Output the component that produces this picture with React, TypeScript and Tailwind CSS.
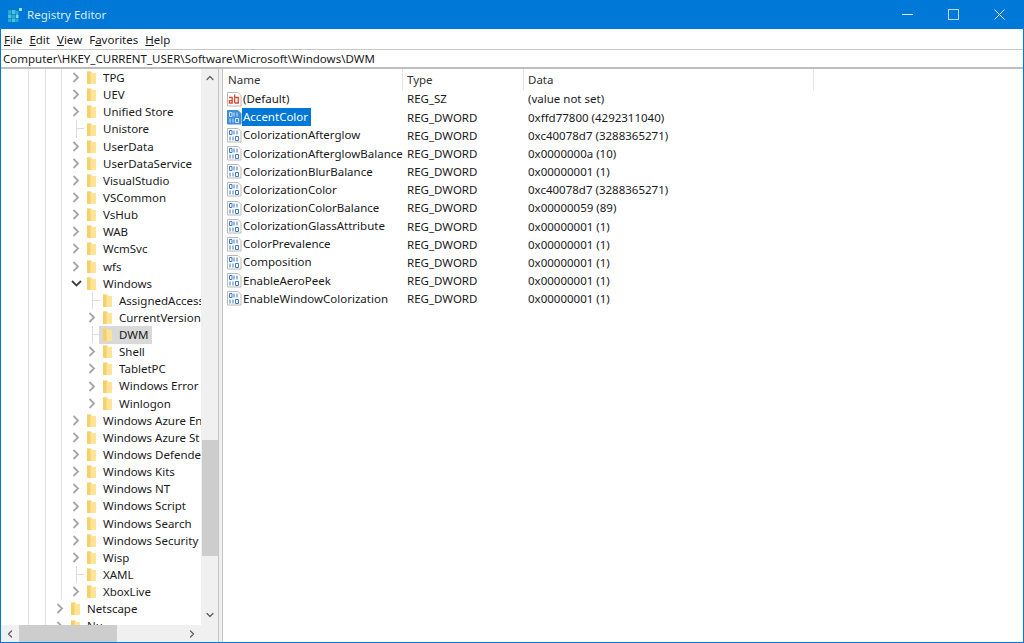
import { ChevronRight, ChevronDown, ChevronUp, ChevronLeft } from 'lucide-react'

type TreeRow = {
  label: string
  depth: number
  expander: 'closed' | 'open' | 'none'
  selected?: boolean
}

const treeRows: TreeRow[] = [
  { label: 'TPG', depth: 0, expander: 'closed' },
  { label: 'UEV', depth: 0, expander: 'closed' },
  { label: 'Unified Store', depth: 0, expander: 'closed' },
  { label: 'Unistore', depth: 0, expander: 'none' },
  { label: 'UserData', depth: 0, expander: 'closed' },
  { label: 'UserDataService', depth: 0, expander: 'closed' },
  { label: 'VisualStudio', depth: 0, expander: 'closed' },
  { label: 'VSCommon', depth: 0, expander: 'closed' },
  { label: 'VsHub', depth: 0, expander: 'closed' },
  { label: 'WAB', depth: 0, expander: 'closed' },
  { label: 'WcmSvc', depth: 0, expander: 'closed' },
  { label: 'wfs', depth: 0, expander: 'closed' },
  { label: 'Windows', depth: 0, expander: 'open' },
  { label: 'AssignedAccess', depth: 1, expander: 'none' },
  { label: 'CurrentVersion', depth: 1, expander: 'closed' },
  { label: 'DWM', depth: 1, expander: 'none', selected: true },
  { label: 'Shell', depth: 1, expander: 'closed' },
  { label: 'TabletPC', depth: 1, expander: 'closed' },
  { label: 'Windows Error', depth: 1, expander: 'closed' },
  { label: 'Winlogon', depth: 1, expander: 'closed' },
  { label: 'Windows Azure En', depth: 0, expander: 'closed' },
  { label: 'Windows Azure St', depth: 0, expander: 'closed' },
  { label: 'Windows Defender', depth: 0, expander: 'closed' },
  { label: 'Windows Kits', depth: 0, expander: 'closed' },
  { label: 'Windows NT', depth: 0, expander: 'closed' },
  { label: 'Windows Script', depth: 0, expander: 'closed' },
  { label: 'Windows Search', depth: 0, expander: 'closed' },
  { label: 'Windows Security', depth: 0, expander: 'closed' },
  { label: 'Wisp', depth: 0, expander: 'closed' },
  { label: 'XAML', depth: 0, expander: 'none' },
  { label: 'XboxLive', depth: 0, expander: 'closed' },
  { label: 'Netscape', depth: -1, expander: 'closed' },
  { label: 'Nu', depth: -1, expander: 'closed' },
]

const values = [
  ['(Default)', 'REG_SZ', '(value not set)'],
  ['AccentColor', 'REG_DWORD', '0xffd77800 (4292311040)'],
  ['ColorizationAfterglow', 'REG_DWORD', '0xc40078d7 (3288365271)'],
  ['ColorizationAfterglowBalance', 'REG_DWORD', '0x0000000a (10)'],
  ['ColorizationBlurBalance', 'REG_DWORD', '0x00000001 (1)'],
  ['ColorizationColor', 'REG_DWORD', '0xc40078d7 (3288365271)'],
  ['ColorizationColorBalance', 'REG_DWORD', '0x00000059 (89)'],
  ['ColorizationGlassAttribute', 'REG_DWORD', '0x00000001 (1)'],
  ['ColorPrevalence', 'REG_DWORD', '0x00000001 (1)'],
  ['Composition', 'REG_DWORD', '0x00000001 (1)'],
  ['EnableAeroPeek', 'REG_DWORD', '0x00000001 (1)'],
  ['EnableWindowColorization', 'REG_DWORD', '0x00000001 (1)'],
]

function AppIcon() {
  return (
    <svg width="14" height="14" viewBox="0 0 14 14" className="shrink-0">
      <rect x="0" y="2" width="3.5" height="4" fill="#2fa8c9" />
      <rect x="4" y="2" width="3.5" height="4" fill="#45c3dc" />
      <rect x="8" y="3" width="2.5" height="3" fill="#2fa8c9" />
      <rect x="0" y="6.5" width="3.5" height="3.5" fill="#45c3dc" />
      <rect x="4" y="6.5" width="3.5" height="3.5" fill="#2fa8c9" />
      <rect x="8" y="6.5" width="2.5" height="3.5" fill="#7bdcec" />
      <rect x="0" y="10.5" width="3.5" height="3.5" fill="#2fa8c9" />
      <rect x="4" y="10.5" width="3.5" height="3.5" fill="#45c3dc" />
      <rect x="8" y="10.5" width="2.5" height="3.5" fill="#2fa8c9" />
      <rect x="11" y="0" width="3" height="3" fill="#9ce6f2" />
    </svg>
  )
}

function Folder() {
  return (
    <svg width="11" height="15" viewBox="0 0 11 15" className="shrink-0">
      <path d="M1 1.5h4.5l1 1.5H10v11H1z" fill="#fde497" />
      <path d="M1 1.5h3.5v12.5H1z" fill="#f7d06a" />
    </svg>
  )
}

function Expander({ kind }: { kind: TreeRow['expander'] }) {
  if (kind === 'open') {
    return (
      <svg width="11" height="7" viewBox="0 0 11 7" className="ml-[9px]">
        <path d="M1 1l4.5 4.5L10 1" fill="none" stroke="#404040" strokeWidth="1.8" />
      </svg>
    )
  }
  if (kind === 'closed') {
    return (
      <svg width="8" height="11" viewBox="0 0 8 11" className="ml-[10px]">
        <path d="M1.5 1L6 5.5L1.5 10" fill="none" stroke="#a6a6a6" strokeWidth="1.8" />
      </svg>
    )
  }
  return (
    <>
      <div className="ml-[14px] w-px h-full bg-[#dcdcdc]" />
      <div className="w-[7px] h-px bg-[#dcdcdc]" />
    </>
  )
}

function FileIcon({ kind, selected }: { kind: 'sz' | 'dword'; selected?: boolean }) {
  const ink = selected ? '#cfe4f8' : '#3c78c4'
  return (
    <svg width="16" height="17" viewBox="0 0 16 17" className="shrink-0">
      <path d="M1.5 1.5h10.5l3 3v10.5h-13.5z" fill={selected ? '#3f8fd8' : '#fff'} stroke={selected ? '#3f8fd8' : '#b8b8b8'} />
      {kind === 'sz' ? (
        <>
          <path d="M3 6.5h3.2v5.5H3.4v-2.4h2.8" fill="none" stroke="#e0492f" strokeWidth="1.3" />
          <path d="M8.7 3.5v8.5M8.7 6.5h3.6v5.5H8.7" fill="none" stroke="#e0492f" strokeWidth="1.3" />
        </>
      ) : (
        <>
          <path d="M3.5 3.5h2.5v4H3.5zM8 3.5v4M11 3.5v4" fill="none" stroke={ink} strokeWidth="1" />
          <path d="M4 9.5v4M7 9.5v4M9.5 9.5h3v4h-3z" fill="none" stroke={ink} strokeWidth="1" />
        </>
      )}
    </svg>
  )
}

function TreeItem({ row }: { row: TreeRow }) {
  return (
    <div className="flex h-[17.15px] items-center whitespace-nowrap">
      <div className="w-[28px] h-full shrink-0 border-r border-[#e3e3e3]" />
      <div className="w-[17px] h-full shrink-0 border-r border-[#e3e3e3]" />
      {row.depth >= 0 ? <div className="w-[16px] h-full shrink-0 border-r border-[#e3e3e3]" /> : null}
      {row.depth === 1 ? <div className="w-[16px] h-full shrink-0" /> : null}
      <div className="w-[24px] h-full shrink-0 flex items-center">
        <Expander kind={row.expander} />
      </div>
      <div className={`-ml-[3px] pl-[3px] pr-[4px] h-[18px] flex items-center ${row.selected ? 'bg-[#d9d9d9]' : ''}`}>
        <Folder />
        <span className="ml-[6px]">{row.label}</span>
      </div>
    </div>
  )
}

export default function App() {
  return (
    <div className="w-[1024px] h-[643px] overflow-hidden flex flex-col bg-white border-x border-b border-[#0078d7] text-[11.5px] text-[#1a1a1a] font-['Noto_Sans','Open_Sans',sans-serif]">
      <div className="h-[29px] shrink-0 -mx-px bg-[#0078d7] flex items-center pt-[1px]">
        <div className="ml-[8px] mr-[5px]"><AppIcon /></div>
        <span className="text-[#d9ebf9]">Registry Editor</span>
        <div className="ml-auto flex items-center pr-[2px] pb-[1px]">
          <div className="w-[46px] flex justify-center"><div className="w-[11px] h-px bg-[#dbeaf8]" /></div>
          <div className="w-[46px] flex justify-center"><div className="w-[11px] h-[11px] border border-[#b9d8f2]" /></div>
          <div className="w-[46px] flex justify-center">
            <svg width="11" height="11" viewBox="0 0 11 11"><path d="M0.5 0.5l10 10M10.5 0.5l-10 10" stroke="#dbeaf8" fill="none" /></svg>
          </div>
        </div>
      </div>
      <div className="h-[20px] shrink-0 flex items-center pl-[3px] pt-[2px] gap-[7px]">
        <span><u>F</u>ile</span>
        <span><u>E</u>dit</span>
        <span><u>V</u>iew</span>
        <span>F<u>a</u>vorites</span>
        <span><u>H</u>elp</span>
      </div>
      <div className="h-[20px] shrink-0 flex items-center pl-[2px] pt-[1px] border-t border-[#c8c8c8] border-b-2 border-b-[#bdbdbd]">
        Computer\HKEY_CURRENT_USER\Software\Microsoft\Windows\DWM
      </div>
      <div className="flex-1 min-h-0 flex">
        <div className="w-[217px] shrink-0 flex flex-col">
          <div className="flex-1 min-h-0 flex">
            <div className="w-[200px] overflow-hidden">
              {treeRows.map(row => <TreeItem key={row.label} row={row} />)}
            </div>
            <div className="w-[17px] bg-[#f0f0f0] flex flex-col items-center">
              <div className="h-[17px] flex items-center"><ChevronUp size={12} strokeWidth={2.6} className="text-[#606060]" /></div>
              <div className="mt-[354px] h-[116px] w-[16px] bg-[#cdcdcd]" />
              <div className="mt-auto h-[19px] pb-[2px] flex items-center"><ChevronDown size={12} strokeWidth={2.6} className="text-[#606060]" /></div>
            </div>
          </div>
          <div className="h-[17px] shrink-0 bg-[#f0f0f0] flex items-center">
            <div className="w-[18px] flex justify-center"><ChevronLeft size={12} strokeWidth={2.6} className="text-[#606060]" /></div>
            <div className="w-[98px] h-full bg-[#cdcdcd]" />
            <div className="ml-[67px] w-[16px] flex justify-center"><ChevronRight size={12} strokeWidth={2.6} className="text-[#606060]" /></div>
          </div>
        </div>
        <div className="w-[5px] shrink-0 border-x border-[#c4c4c4] bg-[#f0f0f0]" />
        <div className="flex-1 min-w-0">
          <div className="h-[21px] flex items-center text-[#333]">
            <div className="w-[180px] h-full flex items-center pl-[5px] pt-[1px] border-r border-[#e5e5e5]">Name</div>
            <div className="w-[121px] h-full flex items-center pl-[4px] pt-[1px] border-r border-[#e5e5e5]">Type</div>
            <div className="w-[290px] h-full flex items-center pl-[4px] pt-[1px] border-r border-[#e5e5e5]">Data</div>
          </div>
          <div>
            {values.map((v, i) => (
              <div key={v[0]} className="h-[18.17px] flex items-center whitespace-nowrap">
                <div className="w-[180px] flex items-center pl-[3px]">
                  <FileIcon kind={i === 0 ? 'sz' : 'dword'} selected={i === 1} />
                  <span className={i === 1 ? 'bg-[#0078d7] text-white leading-[18px] pl-[1px] w-[69px]' : 'leading-[18px] pl-[1px]'}>{v[0]}</span>
                </div>
                <div className="w-[121px] pl-[4px]">{v[1]}</div>
                <div className="pl-[4px]">{v[2]}</div>
              </div>
            ))}
          </div>
        </div>
      </div>
    </div>
  )
}
